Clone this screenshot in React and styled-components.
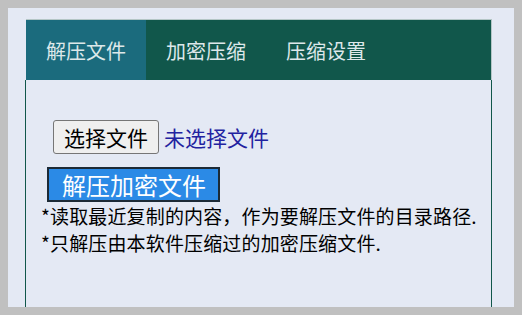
import React, { useState } from 'react';
import styled, { createGlobalStyle } from 'styled-components';

const GlobalStyle = createGlobalStyle`
    html {
        background: #c0c0c0;
    }
    body {
        margin: 8px;
        min-height: calc(100vh - 16px);
        box-sizing: border-box;
        background: #e4e9f4;
        font-family: "Noto Sans CJK SC", "Noto Sans", sans-serif;
    }
`

const tabs = ['解压文件', '加密压缩', '压缩设置']

const App = () => {
    const [active, setActive] = useState(0)

    return (
        <Page>
            <GlobalStyle />
            <TabBar>
                {tabs.map((t, i) => (
                    <Tab key={t} $active={i === active} onClick={() => setActive(i)}>
                        {t}
                    </Tab>
                ))}
            </TabBar>
            <Panel>
                <FileRow>
                    <FileBtn>选择文件</FileBtn>
                    <FileName>未选择文件</FileName>
                </FileRow>
                <DecryptBtn>解压加密文件</DecryptBtn>
                <Notes>
                    <p>*读取最近复制的内容，作为要解压文件的目录路径.</p>
                    <p>*只解压由本软件压缩过的加密压缩文件.</p>
                </Notes>
            </Panel>
        </Page>
    );
}

const Page = styled.div`
    display: flex;
    flex-direction: column;
    min-height: calc(100vh - 16px);
    padding: 11px 22px 0 17px;
    box-sizing: border-box;
`

const TabBar = styled.div`
    display: flex;
    height: 61px;
    margin-left: 1px;
    background: #11574b;
    border: 1px solid #b4c6c6;
    border-bottom: 0;
    border-left: 0;
    box-sizing: border-box;
`

const Tab = styled.div`
    width: 120px;
    display: flex;
    align-items: center;
    justify-content: center;
    padding-top: 1px;
    font-size: 20px;
    color: #dde8ea;
    cursor: pointer;
    background: ${p => (p.$active ? '#1b6b7d' : 'transparent')};
`

const Panel = styled.div`
    flex: 1;
    border-left: 1px solid #11574b;
    border-right: 1px solid #11574b;
    padding: 40px 0 0 15px;
`

const FileRow = styled.div`
    display: flex;
    align-items: center;
    gap: 5px;
    margin-left: 12px;
`

const FileBtn = styled.button`
    font-family: inherit;
    font-size: 21px;
    line-height: 1;
    height: 34px;
    padding: 0 10px;
    color: #000;
    background: #efefef;
    border: 1px solid #767676;
    border-radius: 3px;
`

const FileName = styled.span`
    font-size: 21px;
    color: #2222a0;
`

const DecryptBtn = styled.button`
    display: block;
    margin: 13px 0 0 6px;
    height: 35px;
    padding: 0 12px 0 13px;
    font-family: inherit;
    font-size: 24px;
    line-height: 1;
    color: #fff;
    background: #2b8ae6;
    border: 2px solid #1c2a36;
`

const Notes = styled.div`
    & > p {
        margin: 0;
        font-size: 19px;
        line-height: 27px;
        color: #000;
        white-space: nowrap;
        letter-spacing: 0.15px;
    }
`

export default App;
